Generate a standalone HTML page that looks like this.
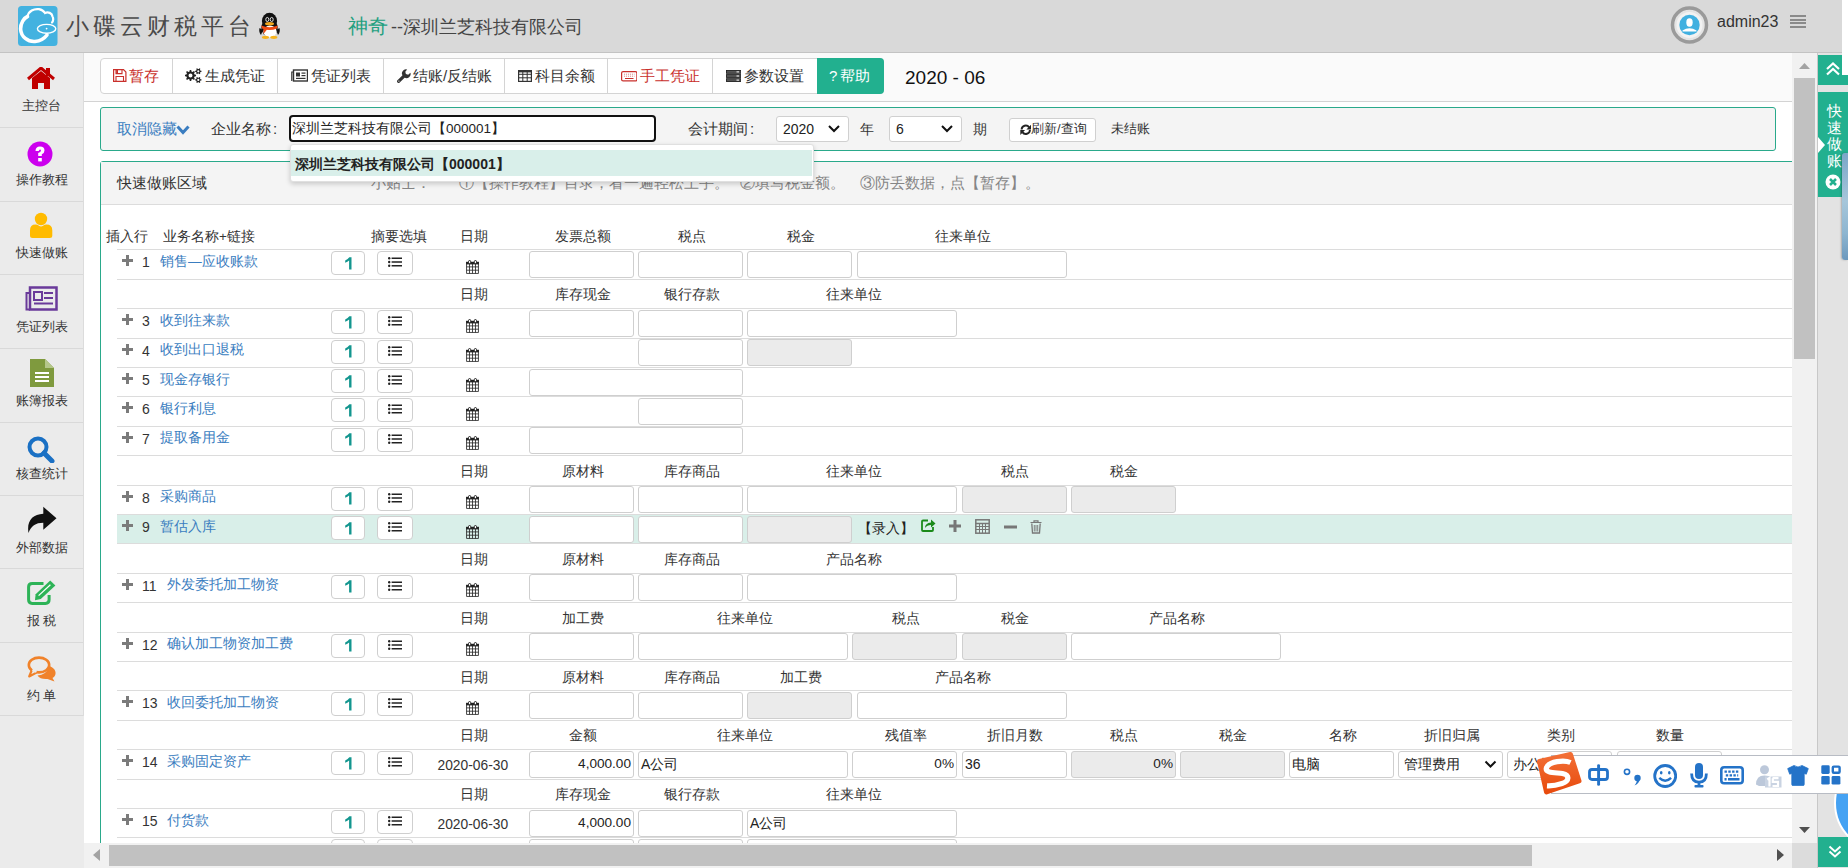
<!DOCTYPE html>
<html><head><meta charset="utf-8"><title>小碟云财税平台</title>
<style>
*{box-sizing:border-box;margin:0;padding:0}
html,body{width:1848px;height:868px;overflow:hidden;background:#fff;font-family:"Liberation Sans", sans-serif;color:#333;font-size:14px;text-spacing-trim:space-all}
.ab{position:absolute}
.t{position:absolute;white-space:nowrap;line-height:1}
.inp{position:absolute;border:1px solid #cfcfcf;border-radius:3px;background:#fff;height:27px}
.dis{background:#ebebeb}
.nb{position:absolute;width:34px;height:24px;border:1px solid #cfcfcf;border-radius:4px;background:#fff}
.lb{position:absolute;width:36px;height:24px;border:1px solid #cfcfcf;border-radius:4px;background:#fff}
.rl{position:absolute;left:117px;width:1675px;height:1px;background:#dcdcdc}
.link{color:#3a7dc0}
.hd{color:#333;font-size:13.5px}
.sbt{position:absolute;left:0;width:83px;text-align:center;font-size:13px;color:#333;line-height:1}
.sep{position:absolute;left:0;width:83px;height:1px;background:#d9d9d9}
</style></head><body>

<div class="ab" style="left:0;top:0;width:1842px;height:53px;background:#d9d9d9;border-bottom:1px solid #c3c3c3"></div>
<svg class="ab" style="left:18px;top:6px" width="40" height="40" viewBox="0 0 40 40">
<rect x="0" y="0" width="39.5" height="40" rx="3.5" fill="#43b2e0"/>
<path d="M9.5 10.5 C6 12, 2.5 17, 2.6 23 C3 31, 10 36, 17 35.5 C22 35, 26 33, 29 29" fill="none" stroke="#fff" stroke-width="3.6" stroke-linecap="round"/>
<path d="M9.5 10.5 C10.5 5, 16 2.5, 21 3.2 C24.5 3.8, 26 5.5, 27 7 C30 5.5, 34 7, 34.5 10.5 C35.5 12, 35.5 15, 34 16.5" fill="none" stroke="#fff" stroke-width="2.2" stroke-linecap="round"/>
<ellipse cx="28.6" cy="22.8" rx="9.2" ry="4.4" fill="none" stroke="#fff" stroke-width="1.4"/>
<circle cx="28.6" cy="22.6" r="0.9" fill="#fff"/>
</svg>
<div class="t" style="left:66px;top:15px;font-size:23px;color:#4a4a4a;font-weight:300;letter-spacing:4px">小碟云财税平台</div>
<svg class="ab" style="left:258px;top:12px" width="23" height="27" viewBox="0 0 23 27">
<ellipse cx="11.5" cy="9" rx="7.6" ry="8.2" fill="#111"/>
<ellipse cx="11.5" cy="16" rx="8.2" ry="9" fill="#111"/>
<path d="M1.5 16 Q0.5 20 3 23 L5 18Z M21.5 16 Q22.5 20 20 23 L18 18Z" fill="#111"/>
<ellipse cx="12" cy="19.5" rx="6.6" ry="6" fill="#fff"/>
<path d="M3.2 13.5 Q11.5 17 19.8 13.5 L19 16.5 Q11.5 19.5 4 16.5Z" fill="#f04a12"/>
<path d="M5.5 16 L5.5 22 L9 17.5Z" fill="#f04a12"/>
<ellipse cx="11.5" cy="11.8" rx="4.5" ry="1.7" fill="#f2a81e"/>
<ellipse cx="9.3" cy="7.5" rx="1.5" ry="2.1" fill="none" stroke="#eee" stroke-width="0.9"/><ellipse cx="13.7" cy="7.5" rx="1.5" ry="2.1" fill="none" stroke="#eee" stroke-width="0.9"/>
<ellipse cx="7.5" cy="25.3" rx="3.6" ry="1.6" fill="#f5b31e"/><ellipse cx="15.8" cy="25.3" rx="3.6" ry="1.6" fill="#f5b31e"/>
</svg>
<div class="t" style="left:348px;top:16px;font-size:20px;color:#24a07f">神奇</div>
<div class="t" style="left:391px;top:18px;font-size:18px;color:#444">--深圳兰芝科技有限公司</div>
<svg class="ab" style="left:1670px;top:5px" width="40" height="40" viewBox="0 0 40 40">
<circle cx="19.5" cy="20" r="17" fill="#e4e4e4" stroke="#9a9a9a" stroke-width="3.5"/>
<circle cx="19.5" cy="20" r="13" fill="#f2f2f2"/>
<circle cx="19.5" cy="20" r="10.2" fill="#41b0e0"/>
<ellipse cx="19.5" cy="17.5" rx="3.2" ry="4.2" fill="#fff"/>
<path d="M12.5 25.5 Q19.5 21 26.5 25.5 L26.5 26.5 L12.5 26.5Z" fill="#fff"/>
</svg>
<div class="t" style="left:1717px;top:14px;font-size:16px;color:#333">admin23</div>
<div class="ab" style="left:1790px;top:15px;width:16px;height:13px;background:repeating-linear-gradient(#8a8a8a 0 2px,transparent 2px 3.5px)"></div>
<div class="ab" style="left:0;top:53px;width:84px;height:815px;background:#ebebeb"></div>
<div class="ab" style="left:83px;top:53px;width:1px;height:663px;background:#dcdcdc"></div>
<div class="sep" style="top:127px"></div>
<div class="sep" style="top:201px"></div>
<div class="sep" style="top:274px"></div>
<div class="sep" style="top:348px"></div>
<div class="sep" style="top:422px"></div>
<div class="sep" style="top:495px"></div>
<div class="sep" style="top:568px"></div>
<div class="sep" style="top:642px"></div>
<div class="sep" style="top:715px"></div>
<div class="sbt" style="top:99px">主控台</div>
<div class="sbt" style="top:173px">操作教程</div>
<div class="sbt" style="top:246px">快速做账</div>
<div class="sbt" style="top:320px">凭证列表</div>
<div class="sbt" style="top:394px">账簿报表</div>
<div class="sbt" style="top:467px">核查统计</div>
<div class="sbt" style="top:541px">外部数据</div>
<div class="sbt" style="top:614px">报 税</div>
<div class="sbt" style="top:689px">约 单</div>
<svg class="ab" style="left:27px;top:67px" width="28" height="23" viewBox="0 0 28 23">
<path d="M1 12 L14 1 L27 12" fill="none" stroke="#c00000" stroke-width="3"/>
<rect x="19" y="1" width="4" height="8" fill="#c00000"/>
<path d="M5 11 L14 4 L23 11 L23 22 L17 22 L17 16 L11 16 L11 22 L5 22Z" fill="#c00000"/>
</svg>
<svg class="ab" style="left:27px;top:141px" width="26" height="26" viewBox="0 0 26 26">
<circle cx="13" cy="13" r="12.5" fill="#cc00ee"/>
<path d="M8.5 10 Q8.5 5.5 13 5.5 Q17.5 5.5 17.5 9.5 Q17.5 12 14.8 13.2 L14.8 15 L11.2 15 L11.2 12 Q14 11 14 9.5 Q14 8.5 13 8.5 Q12 8.5 11.8 10Z" fill="#fff"/>
<rect x="11.2" y="17" width="3.6" height="3.4" fill="#fff"/>
</svg>
<svg class="ab" style="left:29px;top:212px" width="24" height="27" viewBox="0 0 24 27">
<circle cx="12" cy="7" r="6.2" fill="#ffbb00"/>
<path d="M3.5 26 Q1 26 1 23.5 L1 18.5 Q1 12.6 6.5 12.6 Q8.5 12.6 10 13.8 Q12 15 14 13.8 Q15.5 12.6 17.5 12.6 Q23.3 12.6 23.3 18.5 L23.3 23.5 Q23.3 26 20.8 26Z" fill="#ffbb00"/>
</svg>
<svg class="ab" style="left:25px;top:286px" width="33" height="25" viewBox="0 0 33 25">
<rect x="5" y="1.5" width="26.5" height="22" fill="none" stroke="#6a3a9a" stroke-width="2.5"/>
<path d="M5 7 L1.5 7 L1.5 23.5 L5 23.5" fill="none" stroke="#6a3a9a" stroke-width="2"/>
<rect x="9" y="6" width="8" height="8" fill="none" stroke="#6a3a9a" stroke-width="2"/>
<rect x="19" y="6" width="9" height="2" fill="#6a3a9a"/><rect x="19" y="11" width="9" height="2" fill="#6a3a9a"/>
<rect x="9" y="16.5" width="19" height="2" fill="#6a3a9a"/>
</svg>
<svg class="ab" style="left:30px;top:359px" width="24" height="28" viewBox="0 0 24 28">
<path d="M0 0 L15 0 L24 9 L24 28 L0 28Z" fill="#7f9a3e"/>
<path d="M15 0 L15 9 L24 9Z" fill="#b5c78a"/>
<rect x="5" y="13" width="14" height="2" fill="#fff"/><rect x="5" y="17" width="14" height="2" fill="#fff"/><rect x="5" y="21" width="14" height="2" fill="#fff"/>
</svg>
<svg class="ab" style="left:27px;top:436px" width="28" height="27" viewBox="0 0 28 27">
<circle cx="11" cy="11" r="8.5" fill="none" stroke="#1a70c4" stroke-width="4"/>
<path d="M17 17 L25 25" stroke="#1a70c4" stroke-width="5" stroke-linecap="round"/>
</svg>
<svg class="ab" style="left:27px;top:506px" width="30" height="28" viewBox="0 0 30 28">
<path d="M1.5 27 C-0.5 15, 5.5 8.3, 16.3 7.8 L16.3 0.8 L29.5 12.3 L16.3 23.8 L16.3 16.8 C8.5 16.8, 4 20, 1.5 27Z" fill="#111"/>
</svg>
<svg class="ab" style="left:27px;top:580px" width="30" height="25" viewBox="0 0 30 25">
<path d="M16.5 3.5 L5.2 3.5 Q1.6 3.5 1.6 7.1 L1.6 19.8 Q1.6 23.4 5.2 23.4 L18.5 23.4 Q22.1 23.4 22.1 19.8 L22.1 15" fill="none" stroke="#2db357" stroke-width="3"/>
<path d="M8.6 14.2 L23.2 0.6 L28.4 5.4 L13.8 19 L8 20.2Z" fill="#2db357"/>
<path d="M11.6 15.6 L23.4 4.8" stroke="#fff" stroke-width="1.2"/>
</svg>
<svg class="ab" style="left:27px;top:656px" width="30" height="26" viewBox="0 0 30 26">
<path d="M20.5 9.5 Q27.5 11 28.5 16 Q29 20 25.5 22 L27.5 25.5 L20.5 23 Q13 23.5 10.5 19.5 Q19.5 18.5 21.2 12Z" fill="#f0822a"/>
<ellipse cx="12" cy="9" rx="10.2" ry="7.4" fill="#ebebeb" stroke="#f0822a" stroke-width="2.6"/>
<path d="M4.8 14.2 L2.2 20.5 L10 16.4" fill="#ebebeb" stroke="#f0822a" stroke-width="2.2" stroke-linejoin="round"/>
<path d="M5.6 13.6 L9.5 15.8" stroke="#ebebeb" stroke-width="2.4"/>
</svg>
<div class="ab" style="left:84px;top:53px;width:1708px;height:49px;background:#fafafa;border-bottom:1px solid #d3d3d3"></div>
<div class="ab" style="left:100px;top:58px;width:784px;height:36px;border:1px solid #d4d4d4;border-radius:4px;background:#fff"></div>
<div class="ab" style="left:172px;top:59px;width:1px;height:34px;background:#d4d4d4"></div>
<div class="ab" style="left:277px;top:59px;width:1px;height:34px;background:#d4d4d4"></div>
<div class="ab" style="left:383px;top:59px;width:1px;height:34px;background:#d4d4d4"></div>
<div class="ab" style="left:504px;top:59px;width:1px;height:34px;background:#d4d4d4"></div>
<div class="ab" style="left:607px;top:59px;width:1px;height:34px;background:#d4d4d4"></div>
<div class="ab" style="left:712px;top:59px;width:1px;height:34px;background:#d4d4d4"></div>
<div class="ab" style="left:817px;top:58px;width:67px;height:36px;background:#22b08f;border-radius:0 4px 4px 0"></div>
<div class="t" style="left:129px;top:68px;font-size:15px;color:#c9302c">暂存</div>
<div class="t" style="left:205px;top:68px;font-size:15px;color:#333">生成凭证</div>
<div class="t" style="left:311px;top:68px;font-size:15px;color:#333">凭证列表</div>
<div class="t" style="left:413px;top:68px;font-size:15px;color:#333">结账/反结账</div>
<div class="t" style="left:535px;top:68px;font-size:15px;color:#333">科目余额</div>
<div class="t" style="left:640px;top:68px;font-size:15px;color:#c9302c">手工凭证</div>
<div class="t" style="left:744px;top:68px;font-size:15px;color:#333">参数设置</div>
<div class="t" style="left:829px;top:68px;font-size:15px;color:#fff">?&thinsp;帮助</div>
<div class="t" style="left:905px;top:68px;font-size:19px;color:#111">2020 - 06</div>
<svg class="ab" style="left:113px;top:69px" width="14" height="13" viewBox="0 0 14 13"><path d="M0.6 0.6 L10.5 0.6 L12.9 3 L12.9 12.4 L0.6 12.4Z" fill="none" stroke="#c9302c" stroke-width="1.2"/><path d="M3 0.6 V4.6 H9 V0.6 M3 12.4 V7.5 H10.5 V12.4" fill="none" stroke="#c9302c" stroke-width="1.1"/><rect x="3.2" y="0.8" width="1.8" height="3.6" fill="#c9302c"/></svg>
<svg class="ab" style="left:185px;top:68px" width="17" height="15" viewBox="0 0 17 15"><path fill-rule="evenodd" d="M9.60 6.60 L11.05 6.73 L11.05 8.27 L9.60 8.40 L9.04 9.76 L9.96 10.88 L8.88 11.96 L7.76 11.04 L6.40 11.60 L6.27 13.05 L4.73 13.05 L4.60 11.60 L3.24 11.04 L2.12 11.96 L1.04 10.88 L1.96 9.76 L1.40 8.40 L-0.05 8.27 L-0.05 6.73 L1.40 6.60 L1.96 5.24 L1.04 4.12 L2.12 3.04 L3.24 3.96 L4.60 3.40 L4.73 1.95 L6.27 1.95 L6.40 3.40 L7.76 3.96 L8.88 3.04 L9.96 4.12 L9.04 5.24Z M7.50 7.50 A2.0 2.0 0 1 0 3.50 7.50 A2.0 2.0 0 1 0 7.50 7.50Z M15.51 2.65 L16.45 2.72 L16.45 3.88 L15.51 3.95 L14.97 4.88 L15.38 5.73 L14.37 6.32 L13.84 5.54 L12.76 5.54 L12.23 6.32 L11.22 5.73 L11.63 4.88 L11.09 3.95 L10.15 3.88 L10.15 2.72 L11.09 2.65 L11.63 1.72 L11.22 0.87 L12.23 0.28 L12.76 1.06 L13.84 1.06 L14.37 0.28 L15.38 0.87 L14.97 1.72Z M14.40 3.30 A1.1 1.1 0 1 0 12.20 3.30 A1.1 1.1 0 1 0 14.40 3.30Z M15.51 11.25 L16.45 11.32 L16.45 12.48 L15.51 12.55 L14.97 13.48 L15.38 14.33 L14.37 14.92 L13.84 14.14 L12.76 14.14 L12.23 14.92 L11.22 14.33 L11.63 13.48 L11.09 12.55 L10.15 12.48 L10.15 11.32 L11.09 11.25 L11.63 10.32 L11.22 9.47 L12.23 8.88 L12.76 9.66 L13.84 9.66 L14.37 8.88 L15.38 9.47 L14.97 10.32Z M14.40 11.90 A1.1 1.1 0 1 0 12.20 11.90 A1.1 1.1 0 1 0 14.40 11.90Z" fill="#222"/></svg>
<svg class="ab" style="left:291px;top:69px" width="17" height="13" viewBox="0 0 17 13">
<rect x="2.5" y="1" width="14" height="11" fill="none" stroke="#333" stroke-width="1.4"/>
<path d="M2.5 3 L0.8 3 L0.8 12" fill="none" stroke="#333" stroke-width="1.2"/>
<rect x="5" y="3.5" width="4" height="4" fill="#333"/>
<rect x="10.5" y="3.5" width="4" height="1.2" fill="#333"/><rect x="10.5" y="6" width="4" height="1.2" fill="#333"/><rect x="5" y="8.8" width="9.5" height="1.2" fill="#333"/>
</svg>
<svg class="ab" style="left:396.5px;top:69px" width="14" height="14" viewBox="0 0 14 14"><path d="M1.6 12.4 L7.2 6.8" stroke="#333" stroke-width="3.2" stroke-linecap="round"/><path d="M5.6 6.6 A4 4 0 0 1 10.2 0.6 L8.3 2.8 L8.9 5.1 L11.2 5.7 L13.4 3.8 A4 4 0 0 1 7.4 8.4Z" fill="#333"/><circle cx="1.9" cy="12.1" r="0.6" fill="#fff"/></svg>
<svg class="ab" style="left:517.5px;top:69.5px" width="14" height="12" viewBox="0 0 14 12"><rect x="0.6" y="0.6" width="12.8" height="10.8" fill="none" stroke="#333" stroke-width="1.2"/><path d="M0.6 1.6 H13.4" stroke="#333" stroke-width="1.6"/><path d="M0.6 4.3 H13.4 M0.6 7.8 H13.4 M4.8 0.6 V11.4 M9.2 0.6 V11.4" stroke="#333" stroke-width="1"/></svg>
<svg class="ab" style="left:620.5px;top:71px" width="16.5" height="10.5" viewBox="0 0 16.5 10.5"><rect x="0.6" y="0.6" width="15.3" height="9.3" rx="1.5" fill="none" stroke="#c9302c" stroke-width="1.2"/><path d="M3 3.2 H13.5 M3 5.2 H13.5" stroke="#d98a88" stroke-width="1" stroke-dasharray="1.1 0.9"/><path d="M4 7.5 H12.5" stroke="#c9302c" stroke-width="1"/></svg>
<svg class="ab" style="left:725.5px;top:69.5px" width="15.5" height="12" viewBox="0 0 15.5 12"><rect x="0.5" y="0.5" width="14.5" height="2.8" fill="#555" stroke="#222" stroke-width="0.9"/><rect x="0.5" y="4.6" width="14.5" height="2.8" fill="#555" stroke="#222" stroke-width="0.9"/><rect x="0.5" y="8.7" width="14.5" height="2.8" fill="#555" stroke="#222" stroke-width="0.9"/><rect x="10.5" y="1.4" width="2.5" height="1" fill="#fff"/><rect x="10.5" y="5.5" width="2.5" height="1" fill="#fff"/><rect x="10.5" y="9.6" width="2.5" height="1" fill="#fff"/></svg>
<div class="ab" style="left:100px;top:107px;width:1676px;height:44px;background:#f4f4f4;border:1px solid #2aa98b;border-radius:3px"></div>
<div class="t link" style="left:117px;top:121px;font-size:15px">取消隐藏</div>
<svg class="ab" style="left:176px;top:125px" width="14" height="10" viewBox="0 0 14 10"><path d="M1.5 1.5 L7 7.5 L12.5 1.5" fill="none" stroke="#3a7dc0" stroke-width="3"/></svg>
<div class="t" style="left:211px;top:121px;font-size:15px;color:#333">企业名称<span style="margin-left:2px">:</span></div>
<div class="ab" style="left:289px;top:115px;width:367px;height:27px;border:2px solid #111;border-radius:4px;background:#fff"></div>
<div class="t" style="left:292px;top:122px;font-size:13.5px;color:#222">深圳兰芝科技有限公司【000001】</div>
<div class="t" style="left:688px;top:121px;font-size:15px;color:#333">会计期间<span style="margin-left:2px">:</span></div>
<div class="ab" style="left:776px;top:116px;width:73px;height:26px;border:1px solid #d0d0d0;border-radius:3px;background:#fff"></div>
<div class="t" style="left:783px;top:122px;font-size:14px;color:#222">2020</div>
<svg class="ab" style="left:827px;top:124px" width="14" height="10" viewBox="0 0 14 10"><path d="M2 2 L7 7 L12 2" fill="none" stroke="#111" stroke-width="2"/></svg>
<div class="ab" style="left:889px;top:116px;width:73px;height:26px;border:1px solid #d0d0d0;border-radius:3px;background:#fff"></div>
<div class="t" style="left:896px;top:122px;font-size:14px;color:#222">6</div>
<svg class="ab" style="left:940px;top:124px" width="14" height="10" viewBox="0 0 14 10"><path d="M2 2 L7 7 L12 2" fill="none" stroke="#111" stroke-width="2"/></svg>
<div class="t" style="left:860px;top:122px;font-size:14px;color:#333">年</div>
<div class="t" style="left:973px;top:122px;font-size:14px;color:#333">期</div>
<div class="ab" style="left:1009px;top:118px;width:87px;height:24px;border:1px solid #d0d0d0;border-radius:3px;background:#fff"></div>
<svg class="ab" style="left:1019.5px;top:123.5px" width="11.5" height="11.5" viewBox="0 0 11.5 11.5"><path d="M1.6 5.6 A4.1 4.1 0 0 1 9.1 3.4" fill="none" stroke="#222" stroke-width="1.9"/><path d="M11.2 0.6 L11.2 5.4 L6.4 5.4Z" fill="#222"/><path d="M9.9 5.9 A4.1 4.1 0 0 1 2.4 8.1" fill="none" stroke="#222" stroke-width="1.9"/><path d="M0.3 10.9 L0.3 6.1 L5.1 6.1Z" fill="#222"/></svg>
<div class="t" style="left:1031px;top:122px;font-size:13px;color:#333">刷新/查询</div>
<div class="t" style="left:1111px;top:122px;font-size:13px;color:#333">未结账</div>
<div class="ab" style="left:100px;top:161px;width:1720px;height:720px;border:1px solid #2aa98b;border-radius:3px;background:#fff"></div>
<div class="ab" style="left:101px;top:162px;width:1691px;height:43px;background:#f4f4f4;border-bottom:1px solid #dcdcdc"></div>
<div class="t" style="left:117px;top:176px;font-size:14.6px;color:#333">快速做账区域</div>
<div class="t" style="left:371px;top:176px;font-size:14.7px;color:#858585">小贴士：</div>
<div class="t" style="left:459px;top:176px;font-size:14.7px;color:#858585">①【操作教程】目录，看一遍轻松上手。</div>
<div class="t" style="left:740px;top:176px;font-size:14.7px;color:#858585">②填写税金额。</div>
<div class="t" style="left:860px;top:176px;font-size:14.7px;color:#858585">③防丢数据，点【暂存】。</div>
<div class="t hd" style="left:106px;top:230px">插入行</div>
<div class="t hd" style="left:163px;top:230px">业务名称+链接</div>
<div class="t hd" style="left:371px;top:230px">摘要选填</div>
<div class="ab" style="left:117px;top:514.0px;width:1675px;height:29.4px;background:#d9efe9"></div>
<div class="rl" style="top:249.4px"></div>
<div class="rl" style="top:278.8px"></div>
<div class="rl" style="top:308.2px"></div>
<div class="rl" style="top:337.6px"></div>
<div class="rl" style="top:367.0px"></div>
<div class="rl" style="top:396.4px"></div>
<div class="rl" style="top:425.8px"></div>
<div class="rl" style="top:455.2px"></div>
<div class="rl" style="top:484.6px"></div>
<div class="rl" style="top:514.0px"></div>
<div class="rl" style="top:543.4px"></div>
<div class="rl" style="top:572.8px"></div>
<div class="rl" style="top:602.2px"></div>
<div class="rl" style="top:631.6px"></div>
<div class="rl" style="top:661.0px"></div>
<div class="rl" style="top:690.4px"></div>
<div class="rl" style="top:719.8px"></div>
<div class="rl" style="top:749.2px"></div>
<div class="rl" style="top:778.6px"></div>
<div class="rl" style="top:808.0px"></div>
<div class="rl" style="top:837.4px"></div>
<div class="t hd" style="left:274px;width:400px;text-align:center;top:230.0px">日期</div>
<div class="t hd" style="left:383px;width:400px;text-align:center;top:230.0px">发票总额</div>
<div class="t hd" style="left:492px;width:400px;text-align:center;top:230.0px">税点</div>
<div class="t hd" style="left:601px;width:400px;text-align:center;top:230.0px">税金</div>
<div class="t hd" style="left:763px;width:400px;text-align:center;top:230.0px">往来单位</div>
<div class="t hd" style="left:274px;width:400px;text-align:center;top:288.3px">日期</div>
<div class="t hd" style="left:383px;width:400px;text-align:center;top:288.3px">库存现金</div>
<div class="t hd" style="left:492px;width:400px;text-align:center;top:288.3px">银行存款</div>
<div class="t hd" style="left:654px;width:400px;text-align:center;top:288.3px">往来单位</div>
<div class="t hd" style="left:274px;width:400px;text-align:center;top:464.7px">日期</div>
<div class="t hd" style="left:383px;width:400px;text-align:center;top:464.7px">原材料</div>
<div class="t hd" style="left:492px;width:400px;text-align:center;top:464.7px">库存商品</div>
<div class="t hd" style="left:654px;width:400px;text-align:center;top:464.7px">往来单位</div>
<div class="t hd" style="left:815px;width:400px;text-align:center;top:464.7px">税点</div>
<div class="t hd" style="left:924px;width:400px;text-align:center;top:464.7px">税金</div>
<div class="t hd" style="left:274px;width:400px;text-align:center;top:552.9px">日期</div>
<div class="t hd" style="left:383px;width:400px;text-align:center;top:552.9px">原材料</div>
<div class="t hd" style="left:492px;width:400px;text-align:center;top:552.9px">库存商品</div>
<div class="t hd" style="left:654px;width:400px;text-align:center;top:552.9px">产品名称</div>
<div class="t hd" style="left:274px;width:400px;text-align:center;top:611.7px">日期</div>
<div class="t hd" style="left:383px;width:400px;text-align:center;top:611.7px">加工费</div>
<div class="t hd" style="left:545px;width:400px;text-align:center;top:611.7px">往来单位</div>
<div class="t hd" style="left:706px;width:400px;text-align:center;top:611.7px">税点</div>
<div class="t hd" style="left:815px;width:400px;text-align:center;top:611.7px">税金</div>
<div class="t hd" style="left:977px;width:400px;text-align:center;top:611.7px">产品名称</div>
<div class="t hd" style="left:274px;width:400px;text-align:center;top:670.5px">日期</div>
<div class="t hd" style="left:383px;width:400px;text-align:center;top:670.5px">原材料</div>
<div class="t hd" style="left:492px;width:400px;text-align:center;top:670.5px">库存商品</div>
<div class="t hd" style="left:601px;width:400px;text-align:center;top:670.5px">加工费</div>
<div class="t hd" style="left:763px;width:400px;text-align:center;top:670.5px">产品名称</div>
<div class="t hd" style="left:274px;width:400px;text-align:center;top:729.3px">日期</div>
<div class="t hd" style="left:383px;width:400px;text-align:center;top:729.3px">金额</div>
<div class="t hd" style="left:545px;width:400px;text-align:center;top:729.3px">往来单位</div>
<div class="t hd" style="left:706px;width:400px;text-align:center;top:729.3px">残值率</div>
<div class="t hd" style="left:815px;width:400px;text-align:center;top:729.3px">折旧月数</div>
<div class="t hd" style="left:924px;width:400px;text-align:center;top:729.3px">税点</div>
<div class="t hd" style="left:1033px;width:400px;text-align:center;top:729.3px">税金</div>
<div class="t hd" style="left:1143px;width:400px;text-align:center;top:729.3px">名称</div>
<div class="t hd" style="left:1252px;width:400px;text-align:center;top:729.3px">折旧归属</div>
<div class="t hd" style="left:1361px;width:400px;text-align:center;top:729.3px">类别</div>
<div class="t hd" style="left:1470px;width:400px;text-align:center;top:729.3px">数量</div>
<div class="t hd" style="left:274px;width:400px;text-align:center;top:788.1px">日期</div>
<div class="t hd" style="left:383px;width:400px;text-align:center;top:788.1px">库存现金</div>
<div class="t hd" style="left:492px;width:400px;text-align:center;top:788.1px">银行存款</div>
<div class="t hd" style="left:654px;width:400px;text-align:center;top:788.1px">往来单位</div>
<div class="inp" style="left:529px;top:251.0px;width:105px"></div>
<div class="inp" style="left:638px;top:251.0px;width:105px"></div>
<div class="inp" style="left:747px;top:251.0px;width:105px"></div>
<div class="inp" style="left:857px;top:251.0px;width:210px"></div>
<div class="inp" style="left:529px;top:309.8px;width:105px"></div>
<div class="inp" style="left:638px;top:309.8px;width:105px"></div>
<div class="inp" style="left:747px;top:309.8px;width:210px"></div>
<div class="inp" style="left:638px;top:339.2px;width:105px"></div>
<div class="inp dis" style="left:747px;top:339.2px;width:105px"></div>
<div class="inp" style="left:529px;top:368.6px;width:214px"></div>
<div class="inp" style="left:638px;top:398.0px;width:105px"></div>
<div class="inp" style="left:529px;top:427.4px;width:214px"></div>
<div class="inp" style="left:529px;top:486.2px;width:105px"></div>
<div class="inp" style="left:638px;top:486.2px;width:105px"></div>
<div class="inp" style="left:747px;top:486.2px;width:210px"></div>
<div class="inp dis" style="left:962px;top:486.2px;width:105px"></div>
<div class="inp dis" style="left:1071px;top:486.2px;width:105px"></div>
<div class="inp" style="left:529px;top:515.6px;width:105px"></div>
<div class="inp" style="left:638px;top:515.6px;width:105px"></div>
<div class="inp dis" style="left:747px;top:515.6px;width:105px"></div>
<div class="inp" style="left:529px;top:574.4px;width:105px"></div>
<div class="inp" style="left:638px;top:574.4px;width:105px"></div>
<div class="inp" style="left:747px;top:574.4px;width:210px"></div>
<div class="inp" style="left:529px;top:633.2px;width:105px"></div>
<div class="inp" style="left:638px;top:633.2px;width:210px"></div>
<div class="inp dis" style="left:852px;top:633.2px;width:105px"></div>
<div class="inp dis" style="left:962px;top:633.2px;width:105px"></div>
<div class="inp" style="left:1071px;top:633.2px;width:210px"></div>
<div class="inp" style="left:529px;top:692.0px;width:105px"></div>
<div class="inp" style="left:638px;top:692.0px;width:105px"></div>
<div class="inp dis" style="left:747px;top:692.0px;width:105px"></div>
<div class="inp" style="left:857px;top:692.0px;width:210px"></div>
<div class="inp" style="left:529px;top:750.8px;width:105px"></div>
<div class="t" style="left:529px;width:102px;text-align:right;top:757.3px;font-size:13.6px;color:#222">4,000.00</div>
<div class="inp" style="left:638px;top:750.8px;width:210px"></div>
<div class="t" style="left:641px;top:757.3px;font-size:14px;color:#222">A公司</div>
<div class="inp" style="left:852px;top:750.8px;width:105px"></div>
<div class="t" style="left:852px;width:102px;text-align:right;top:757.3px;font-size:13.6px;color:#222">0%</div>
<div class="inp" style="left:962px;top:750.8px;width:105px"></div>
<div class="t" style="left:965px;top:757.3px;font-size:14px;color:#222">36</div>
<div class="inp dis" style="left:1071px;top:750.8px;width:105px"></div>
<div class="t" style="left:1071px;width:102px;text-align:right;top:757.3px;font-size:13.6px;color:#222">0%</div>
<div class="inp dis" style="left:1180px;top:750.8px;width:105px"></div>
<div class="inp" style="left:1289px;top:750.8px;width:105px"></div>
<div class="t" style="left:1292px;top:757.3px;font-size:14px;color:#222">电脑</div>
<div class="inp" style="left:1398px;top:750.8px;width:105px"></div>
<div class="t" style="left:1404px;top:757.3px;font-size:14px;color:#222">管理费用</div>
<svg class="ab" style="left:1484px;top:759.8px" width="13" height="9" viewBox="0 0 13 9"><path d="M1.5 1.5 L6.5 6.5 L11.5 1.5" fill="none" stroke="#111" stroke-width="2"/></svg>
<div class="inp" style="left:1507px;top:750.8px;width:105px"></div>
<div class="t" style="left:1513px;top:757.3px;font-size:14px;color:#222">办公设备</div>
<svg class="ab" style="left:1593px;top:759.8px" width="13" height="9" viewBox="0 0 13 9"><path d="M1.5 1.5 L6.5 6.5 L11.5 1.5" fill="none" stroke="#111" stroke-width="2"/></svg>
<div class="inp" style="left:1617px;top:750.8px;width:105px"></div>
<div class="inp" style="left:529px;top:809.6px;width:105px"></div>
<div class="t" style="left:529px;width:102px;text-align:right;top:816.1px;font-size:13.6px;color:#222">4,000.00</div>
<div class="inp" style="left:638px;top:809.6px;width:105px"></div>
<div class="inp" style="left:747px;top:809.6px;width:210px"></div>
<div class="t" style="left:750px;top:816.1px;font-size:14px;color:#222">A公司</div>
<div class="inp" style="left:529px;top:839.0px;width:105px"></div>
<div class="inp" style="left:638px;top:839.0px;width:105px"></div>
<div class="inp" style="left:747px;top:839.0px;width:210px"></div>
<svg class="ab" style="left:122px;top:255.4px" width="11" height="11" viewBox="0 0 11 11"><path d="M5.5 0 V11 M0 5.5 H11" stroke="#7b7b7b" stroke-width="3"/></svg>
<div class="t" style="left:142px;top:255.4px;font-size:14px;color:#333">1</div>
<div class="t link" style="left:160px;top:255.0px;font-size:13.7px">销售—应收账款</div>
<div class="nb" style="left:331px;top:251.4px"><svg style="position:absolute;left:12px;top:4.5px" width="9" height="13" viewBox="0 0 9 13"><path d="M5.3 0.3 L7.5 0.3 L7.5 12.6 L5.1 12.6 L5.1 3.6 Q3.6 5 1.2 5.8 L1.2 3.5 Q4 2.4 5.3 0.3Z" fill="#13968f"/></svg></div>
<div class="lb" style="left:377px;top:251.4px"></div>
<svg class="ab" style="left:388px;top:257.4px" width="14" height="10" viewBox="0 0 14 10"><circle cx="1.2" cy="1.2" r="1.2" fill="#222"/><circle cx="1.2" cy="5" r="1.2" fill="#222"/><circle cx="1.2" cy="8.8" r="1.2" fill="#222"/><path d="M3.6 1.2 H14 M3.6 5 H14 M3.6 8.8 H14" stroke="#222" stroke-width="1.45"/></svg>
<svg class="ab" style="left:466px;top:260.0px" width="13" height="14" viewBox="0 0 13 14"><rect x="0" y="1.8" width="13" height="2.6" fill="#222"/><path d="M0.55 2 V13.45 H12.45 V2 M0.5 6.9 H12.5 M0.5 10.2 H12.5 M3.5 4 V13.5 M6.5 4 V13.5 M9.5 4 V13.5" fill="none" stroke="#2a2a2a" stroke-width="0.85"/><rect x="2.5" y="0.5" width="2.2" height="3.2" rx="1.1" fill="#fff" stroke="#222" stroke-width="1"/><rect x="8.3" y="0.5" width="2.2" height="3.2" rx="1.1" fill="#fff" stroke="#222" stroke-width="1"/></svg>
<svg class="ab" style="left:122px;top:314.2px" width="11" height="11" viewBox="0 0 11 11"><path d="M5.5 0 V11 M0 5.5 H11" stroke="#7b7b7b" stroke-width="3"/></svg>
<div class="t" style="left:142px;top:314.2px;font-size:14px;color:#333">3</div>
<div class="t link" style="left:160px;top:313.8px;font-size:13.7px">收到往来款</div>
<div class="nb" style="left:331px;top:310.2px"><svg style="position:absolute;left:12px;top:4.5px" width="9" height="13" viewBox="0 0 9 13"><path d="M5.3 0.3 L7.5 0.3 L7.5 12.6 L5.1 12.6 L5.1 3.6 Q3.6 5 1.2 5.8 L1.2 3.5 Q4 2.4 5.3 0.3Z" fill="#13968f"/></svg></div>
<div class="lb" style="left:377px;top:310.2px"></div>
<svg class="ab" style="left:388px;top:316.2px" width="14" height="10" viewBox="0 0 14 10"><circle cx="1.2" cy="1.2" r="1.2" fill="#222"/><circle cx="1.2" cy="5" r="1.2" fill="#222"/><circle cx="1.2" cy="8.8" r="1.2" fill="#222"/><path d="M3.6 1.2 H14 M3.6 5 H14 M3.6 8.8 H14" stroke="#222" stroke-width="1.45"/></svg>
<svg class="ab" style="left:466px;top:318.8px" width="13" height="14" viewBox="0 0 13 14"><rect x="0" y="1.8" width="13" height="2.6" fill="#222"/><path d="M0.55 2 V13.45 H12.45 V2 M0.5 6.9 H12.5 M0.5 10.2 H12.5 M3.5 4 V13.5 M6.5 4 V13.5 M9.5 4 V13.5" fill="none" stroke="#2a2a2a" stroke-width="0.85"/><rect x="2.5" y="0.5" width="2.2" height="3.2" rx="1.1" fill="#fff" stroke="#222" stroke-width="1"/><rect x="8.3" y="0.5" width="2.2" height="3.2" rx="1.1" fill="#fff" stroke="#222" stroke-width="1"/></svg>
<svg class="ab" style="left:122px;top:343.6px" width="11" height="11" viewBox="0 0 11 11"><path d="M5.5 0 V11 M0 5.5 H11" stroke="#7b7b7b" stroke-width="3"/></svg>
<div class="t" style="left:142px;top:343.6px;font-size:14px;color:#333">4</div>
<div class="t link" style="left:160px;top:343.2px;font-size:13.7px">收到出口退税</div>
<div class="nb" style="left:331px;top:339.6px"><svg style="position:absolute;left:12px;top:4.5px" width="9" height="13" viewBox="0 0 9 13"><path d="M5.3 0.3 L7.5 0.3 L7.5 12.6 L5.1 12.6 L5.1 3.6 Q3.6 5 1.2 5.8 L1.2 3.5 Q4 2.4 5.3 0.3Z" fill="#13968f"/></svg></div>
<div class="lb" style="left:377px;top:339.6px"></div>
<svg class="ab" style="left:388px;top:345.6px" width="14" height="10" viewBox="0 0 14 10"><circle cx="1.2" cy="1.2" r="1.2" fill="#222"/><circle cx="1.2" cy="5" r="1.2" fill="#222"/><circle cx="1.2" cy="8.8" r="1.2" fill="#222"/><path d="M3.6 1.2 H14 M3.6 5 H14 M3.6 8.8 H14" stroke="#222" stroke-width="1.45"/></svg>
<svg class="ab" style="left:466px;top:348.2px" width="13" height="14" viewBox="0 0 13 14"><rect x="0" y="1.8" width="13" height="2.6" fill="#222"/><path d="M0.55 2 V13.45 H12.45 V2 M0.5 6.9 H12.5 M0.5 10.2 H12.5 M3.5 4 V13.5 M6.5 4 V13.5 M9.5 4 V13.5" fill="none" stroke="#2a2a2a" stroke-width="0.85"/><rect x="2.5" y="0.5" width="2.2" height="3.2" rx="1.1" fill="#fff" stroke="#222" stroke-width="1"/><rect x="8.3" y="0.5" width="2.2" height="3.2" rx="1.1" fill="#fff" stroke="#222" stroke-width="1"/></svg>
<svg class="ab" style="left:122px;top:373.0px" width="11" height="11" viewBox="0 0 11 11"><path d="M5.5 0 V11 M0 5.5 H11" stroke="#7b7b7b" stroke-width="3"/></svg>
<div class="t" style="left:142px;top:373.0px;font-size:14px;color:#333">5</div>
<div class="t link" style="left:160px;top:372.6px;font-size:13.7px">现金存银行</div>
<div class="nb" style="left:331px;top:369.0px"><svg style="position:absolute;left:12px;top:4.5px" width="9" height="13" viewBox="0 0 9 13"><path d="M5.3 0.3 L7.5 0.3 L7.5 12.6 L5.1 12.6 L5.1 3.6 Q3.6 5 1.2 5.8 L1.2 3.5 Q4 2.4 5.3 0.3Z" fill="#13968f"/></svg></div>
<div class="lb" style="left:377px;top:369.0px"></div>
<svg class="ab" style="left:388px;top:375.0px" width="14" height="10" viewBox="0 0 14 10"><circle cx="1.2" cy="1.2" r="1.2" fill="#222"/><circle cx="1.2" cy="5" r="1.2" fill="#222"/><circle cx="1.2" cy="8.8" r="1.2" fill="#222"/><path d="M3.6 1.2 H14 M3.6 5 H14 M3.6 8.8 H14" stroke="#222" stroke-width="1.45"/></svg>
<svg class="ab" style="left:466px;top:377.6px" width="13" height="14" viewBox="0 0 13 14"><rect x="0" y="1.8" width="13" height="2.6" fill="#222"/><path d="M0.55 2 V13.45 H12.45 V2 M0.5 6.9 H12.5 M0.5 10.2 H12.5 M3.5 4 V13.5 M6.5 4 V13.5 M9.5 4 V13.5" fill="none" stroke="#2a2a2a" stroke-width="0.85"/><rect x="2.5" y="0.5" width="2.2" height="3.2" rx="1.1" fill="#fff" stroke="#222" stroke-width="1"/><rect x="8.3" y="0.5" width="2.2" height="3.2" rx="1.1" fill="#fff" stroke="#222" stroke-width="1"/></svg>
<svg class="ab" style="left:122px;top:402.4px" width="11" height="11" viewBox="0 0 11 11"><path d="M5.5 0 V11 M0 5.5 H11" stroke="#7b7b7b" stroke-width="3"/></svg>
<div class="t" style="left:142px;top:402.4px;font-size:14px;color:#333">6</div>
<div class="t link" style="left:160px;top:402.0px;font-size:13.7px">银行利息</div>
<div class="nb" style="left:331px;top:398.4px"><svg style="position:absolute;left:12px;top:4.5px" width="9" height="13" viewBox="0 0 9 13"><path d="M5.3 0.3 L7.5 0.3 L7.5 12.6 L5.1 12.6 L5.1 3.6 Q3.6 5 1.2 5.8 L1.2 3.5 Q4 2.4 5.3 0.3Z" fill="#13968f"/></svg></div>
<div class="lb" style="left:377px;top:398.4px"></div>
<svg class="ab" style="left:388px;top:404.4px" width="14" height="10" viewBox="0 0 14 10"><circle cx="1.2" cy="1.2" r="1.2" fill="#222"/><circle cx="1.2" cy="5" r="1.2" fill="#222"/><circle cx="1.2" cy="8.8" r="1.2" fill="#222"/><path d="M3.6 1.2 H14 M3.6 5 H14 M3.6 8.8 H14" stroke="#222" stroke-width="1.45"/></svg>
<svg class="ab" style="left:466px;top:407.0px" width="13" height="14" viewBox="0 0 13 14"><rect x="0" y="1.8" width="13" height="2.6" fill="#222"/><path d="M0.55 2 V13.45 H12.45 V2 M0.5 6.9 H12.5 M0.5 10.2 H12.5 M3.5 4 V13.5 M6.5 4 V13.5 M9.5 4 V13.5" fill="none" stroke="#2a2a2a" stroke-width="0.85"/><rect x="2.5" y="0.5" width="2.2" height="3.2" rx="1.1" fill="#fff" stroke="#222" stroke-width="1"/><rect x="8.3" y="0.5" width="2.2" height="3.2" rx="1.1" fill="#fff" stroke="#222" stroke-width="1"/></svg>
<svg class="ab" style="left:122px;top:431.8px" width="11" height="11" viewBox="0 0 11 11"><path d="M5.5 0 V11 M0 5.5 H11" stroke="#7b7b7b" stroke-width="3"/></svg>
<div class="t" style="left:142px;top:431.8px;font-size:14px;color:#333">7</div>
<div class="t link" style="left:160px;top:431.4px;font-size:13.7px">提取备用金</div>
<div class="nb" style="left:331px;top:427.8px"><svg style="position:absolute;left:12px;top:4.5px" width="9" height="13" viewBox="0 0 9 13"><path d="M5.3 0.3 L7.5 0.3 L7.5 12.6 L5.1 12.6 L5.1 3.6 Q3.6 5 1.2 5.8 L1.2 3.5 Q4 2.4 5.3 0.3Z" fill="#13968f"/></svg></div>
<div class="lb" style="left:377px;top:427.8px"></div>
<svg class="ab" style="left:388px;top:433.8px" width="14" height="10" viewBox="0 0 14 10"><circle cx="1.2" cy="1.2" r="1.2" fill="#222"/><circle cx="1.2" cy="5" r="1.2" fill="#222"/><circle cx="1.2" cy="8.8" r="1.2" fill="#222"/><path d="M3.6 1.2 H14 M3.6 5 H14 M3.6 8.8 H14" stroke="#222" stroke-width="1.45"/></svg>
<svg class="ab" style="left:466px;top:436.4px" width="13" height="14" viewBox="0 0 13 14"><rect x="0" y="1.8" width="13" height="2.6" fill="#222"/><path d="M0.55 2 V13.45 H12.45 V2 M0.5 6.9 H12.5 M0.5 10.2 H12.5 M3.5 4 V13.5 M6.5 4 V13.5 M9.5 4 V13.5" fill="none" stroke="#2a2a2a" stroke-width="0.85"/><rect x="2.5" y="0.5" width="2.2" height="3.2" rx="1.1" fill="#fff" stroke="#222" stroke-width="1"/><rect x="8.3" y="0.5" width="2.2" height="3.2" rx="1.1" fill="#fff" stroke="#222" stroke-width="1"/></svg>
<svg class="ab" style="left:122px;top:490.6px" width="11" height="11" viewBox="0 0 11 11"><path d="M5.5 0 V11 M0 5.5 H11" stroke="#7b7b7b" stroke-width="3"/></svg>
<div class="t" style="left:142px;top:490.6px;font-size:14px;color:#333">8</div>
<div class="t link" style="left:160px;top:490.2px;font-size:13.7px">采购商品</div>
<div class="nb" style="left:331px;top:486.6px"><svg style="position:absolute;left:12px;top:4.5px" width="9" height="13" viewBox="0 0 9 13"><path d="M5.3 0.3 L7.5 0.3 L7.5 12.6 L5.1 12.6 L5.1 3.6 Q3.6 5 1.2 5.8 L1.2 3.5 Q4 2.4 5.3 0.3Z" fill="#13968f"/></svg></div>
<div class="lb" style="left:377px;top:486.6px"></div>
<svg class="ab" style="left:388px;top:492.6px" width="14" height="10" viewBox="0 0 14 10"><circle cx="1.2" cy="1.2" r="1.2" fill="#222"/><circle cx="1.2" cy="5" r="1.2" fill="#222"/><circle cx="1.2" cy="8.8" r="1.2" fill="#222"/><path d="M3.6 1.2 H14 M3.6 5 H14 M3.6 8.8 H14" stroke="#222" stroke-width="1.45"/></svg>
<svg class="ab" style="left:466px;top:495.2px" width="13" height="14" viewBox="0 0 13 14"><rect x="0" y="1.8" width="13" height="2.6" fill="#222"/><path d="M0.55 2 V13.45 H12.45 V2 M0.5 6.9 H12.5 M0.5 10.2 H12.5 M3.5 4 V13.5 M6.5 4 V13.5 M9.5 4 V13.5" fill="none" stroke="#2a2a2a" stroke-width="0.85"/><rect x="2.5" y="0.5" width="2.2" height="3.2" rx="1.1" fill="#fff" stroke="#222" stroke-width="1"/><rect x="8.3" y="0.5" width="2.2" height="3.2" rx="1.1" fill="#fff" stroke="#222" stroke-width="1"/></svg>
<svg class="ab" style="left:122px;top:520.0px" width="11" height="11" viewBox="0 0 11 11"><path d="M5.5 0 V11 M0 5.5 H11" stroke="#7b7b7b" stroke-width="3"/></svg>
<div class="t" style="left:142px;top:520.0px;font-size:14px;color:#333">9</div>
<div class="t link" style="left:160px;top:519.6px;font-size:13.7px">暂估入库</div>
<div class="nb" style="left:331px;top:516.0px"><svg style="position:absolute;left:12px;top:4.5px" width="9" height="13" viewBox="0 0 9 13"><path d="M5.3 0.3 L7.5 0.3 L7.5 12.6 L5.1 12.6 L5.1 3.6 Q3.6 5 1.2 5.8 L1.2 3.5 Q4 2.4 5.3 0.3Z" fill="#13968f"/></svg></div>
<div class="lb" style="left:377px;top:516.0px"></div>
<svg class="ab" style="left:388px;top:522.0px" width="14" height="10" viewBox="0 0 14 10"><circle cx="1.2" cy="1.2" r="1.2" fill="#222"/><circle cx="1.2" cy="5" r="1.2" fill="#222"/><circle cx="1.2" cy="8.8" r="1.2" fill="#222"/><path d="M3.6 1.2 H14 M3.6 5 H14 M3.6 8.8 H14" stroke="#222" stroke-width="1.45"/></svg>
<svg class="ab" style="left:466px;top:524.6px" width="13" height="14" viewBox="0 0 13 14"><rect x="0" y="1.8" width="13" height="2.6" fill="#222"/><path d="M0.55 2 V13.45 H12.45 V2 M0.5 6.9 H12.5 M0.5 10.2 H12.5 M3.5 4 V13.5 M6.5 4 V13.5 M9.5 4 V13.5" fill="none" stroke="#2a2a2a" stroke-width="0.85"/><rect x="2.5" y="0.5" width="2.2" height="3.2" rx="1.1" fill="#fff" stroke="#222" stroke-width="1"/><rect x="8.3" y="0.5" width="2.2" height="3.2" rx="1.1" fill="#fff" stroke="#222" stroke-width="1"/></svg>
<svg class="ab" style="left:122px;top:578.8px" width="11" height="11" viewBox="0 0 11 11"><path d="M5.5 0 V11 M0 5.5 H11" stroke="#7b7b7b" stroke-width="3"/></svg>
<div class="t" style="left:142px;top:578.8px;font-size:14px;color:#333">11</div>
<div class="t link" style="left:167px;top:578.4px;font-size:13.7px">外发委托加工物资</div>
<div class="nb" style="left:331px;top:574.8px"><svg style="position:absolute;left:12px;top:4.5px" width="9" height="13" viewBox="0 0 9 13"><path d="M5.3 0.3 L7.5 0.3 L7.5 12.6 L5.1 12.6 L5.1 3.6 Q3.6 5 1.2 5.8 L1.2 3.5 Q4 2.4 5.3 0.3Z" fill="#13968f"/></svg></div>
<div class="lb" style="left:377px;top:574.8px"></div>
<svg class="ab" style="left:388px;top:580.8px" width="14" height="10" viewBox="0 0 14 10"><circle cx="1.2" cy="1.2" r="1.2" fill="#222"/><circle cx="1.2" cy="5" r="1.2" fill="#222"/><circle cx="1.2" cy="8.8" r="1.2" fill="#222"/><path d="M3.6 1.2 H14 M3.6 5 H14 M3.6 8.8 H14" stroke="#222" stroke-width="1.45"/></svg>
<svg class="ab" style="left:466px;top:583.4px" width="13" height="14" viewBox="0 0 13 14"><rect x="0" y="1.8" width="13" height="2.6" fill="#222"/><path d="M0.55 2 V13.45 H12.45 V2 M0.5 6.9 H12.5 M0.5 10.2 H12.5 M3.5 4 V13.5 M6.5 4 V13.5 M9.5 4 V13.5" fill="none" stroke="#2a2a2a" stroke-width="0.85"/><rect x="2.5" y="0.5" width="2.2" height="3.2" rx="1.1" fill="#fff" stroke="#222" stroke-width="1"/><rect x="8.3" y="0.5" width="2.2" height="3.2" rx="1.1" fill="#fff" stroke="#222" stroke-width="1"/></svg>
<svg class="ab" style="left:122px;top:637.6px" width="11" height="11" viewBox="0 0 11 11"><path d="M5.5 0 V11 M0 5.5 H11" stroke="#7b7b7b" stroke-width="3"/></svg>
<div class="t" style="left:142px;top:637.6px;font-size:14px;color:#333">12</div>
<div class="t link" style="left:167px;top:637.2px;font-size:13.7px">确认加工物资加工费</div>
<div class="nb" style="left:331px;top:633.6px"><svg style="position:absolute;left:12px;top:4.5px" width="9" height="13" viewBox="0 0 9 13"><path d="M5.3 0.3 L7.5 0.3 L7.5 12.6 L5.1 12.6 L5.1 3.6 Q3.6 5 1.2 5.8 L1.2 3.5 Q4 2.4 5.3 0.3Z" fill="#13968f"/></svg></div>
<div class="lb" style="left:377px;top:633.6px"></div>
<svg class="ab" style="left:388px;top:639.6px" width="14" height="10" viewBox="0 0 14 10"><circle cx="1.2" cy="1.2" r="1.2" fill="#222"/><circle cx="1.2" cy="5" r="1.2" fill="#222"/><circle cx="1.2" cy="8.8" r="1.2" fill="#222"/><path d="M3.6 1.2 H14 M3.6 5 H14 M3.6 8.8 H14" stroke="#222" stroke-width="1.45"/></svg>
<svg class="ab" style="left:466px;top:642.2px" width="13" height="14" viewBox="0 0 13 14"><rect x="0" y="1.8" width="13" height="2.6" fill="#222"/><path d="M0.55 2 V13.45 H12.45 V2 M0.5 6.9 H12.5 M0.5 10.2 H12.5 M3.5 4 V13.5 M6.5 4 V13.5 M9.5 4 V13.5" fill="none" stroke="#2a2a2a" stroke-width="0.85"/><rect x="2.5" y="0.5" width="2.2" height="3.2" rx="1.1" fill="#fff" stroke="#222" stroke-width="1"/><rect x="8.3" y="0.5" width="2.2" height="3.2" rx="1.1" fill="#fff" stroke="#222" stroke-width="1"/></svg>
<svg class="ab" style="left:122px;top:696.4px" width="11" height="11" viewBox="0 0 11 11"><path d="M5.5 0 V11 M0 5.5 H11" stroke="#7b7b7b" stroke-width="3"/></svg>
<div class="t" style="left:142px;top:696.4px;font-size:14px;color:#333">13</div>
<div class="t link" style="left:167px;top:696.0px;font-size:13.7px">收回委托加工物资</div>
<div class="nb" style="left:331px;top:692.4px"><svg style="position:absolute;left:12px;top:4.5px" width="9" height="13" viewBox="0 0 9 13"><path d="M5.3 0.3 L7.5 0.3 L7.5 12.6 L5.1 12.6 L5.1 3.6 Q3.6 5 1.2 5.8 L1.2 3.5 Q4 2.4 5.3 0.3Z" fill="#13968f"/></svg></div>
<div class="lb" style="left:377px;top:692.4px"></div>
<svg class="ab" style="left:388px;top:698.4px" width="14" height="10" viewBox="0 0 14 10"><circle cx="1.2" cy="1.2" r="1.2" fill="#222"/><circle cx="1.2" cy="5" r="1.2" fill="#222"/><circle cx="1.2" cy="8.8" r="1.2" fill="#222"/><path d="M3.6 1.2 H14 M3.6 5 H14 M3.6 8.8 H14" stroke="#222" stroke-width="1.45"/></svg>
<svg class="ab" style="left:466px;top:701.0px" width="13" height="14" viewBox="0 0 13 14"><rect x="0" y="1.8" width="13" height="2.6" fill="#222"/><path d="M0.55 2 V13.45 H12.45 V2 M0.5 6.9 H12.5 M0.5 10.2 H12.5 M3.5 4 V13.5 M6.5 4 V13.5 M9.5 4 V13.5" fill="none" stroke="#2a2a2a" stroke-width="0.85"/><rect x="2.5" y="0.5" width="2.2" height="3.2" rx="1.1" fill="#fff" stroke="#222" stroke-width="1"/><rect x="8.3" y="0.5" width="2.2" height="3.2" rx="1.1" fill="#fff" stroke="#222" stroke-width="1"/></svg>
<svg class="ab" style="left:122px;top:755.2px" width="11" height="11" viewBox="0 0 11 11"><path d="M5.5 0 V11 M0 5.5 H11" stroke="#7b7b7b" stroke-width="3"/></svg>
<div class="t" style="left:142px;top:755.2px;font-size:14px;color:#333">14</div>
<div class="t link" style="left:167px;top:754.8px;font-size:13.7px">采购固定资产</div>
<div class="nb" style="left:331px;top:751.2px"><svg style="position:absolute;left:12px;top:4.5px" width="9" height="13" viewBox="0 0 9 13"><path d="M5.3 0.3 L7.5 0.3 L7.5 12.6 L5.1 12.6 L5.1 3.6 Q3.6 5 1.2 5.8 L1.2 3.5 Q4 2.4 5.3 0.3Z" fill="#13968f"/></svg></div>
<div class="lb" style="left:377px;top:751.2px"></div>
<svg class="ab" style="left:388px;top:757.2px" width="14" height="10" viewBox="0 0 14 10"><circle cx="1.2" cy="1.2" r="1.2" fill="#222"/><circle cx="1.2" cy="5" r="1.2" fill="#222"/><circle cx="1.2" cy="8.8" r="1.2" fill="#222"/><path d="M3.6 1.2 H14 M3.6 5 H14 M3.6 8.8 H14" stroke="#222" stroke-width="1.45"/></svg>
<div class="t" style="left:437.5px;top:759.2px;font-size:13.8px;color:#333">2020-06-30</div>
<svg class="ab" style="left:122px;top:814.0px" width="11" height="11" viewBox="0 0 11 11"><path d="M5.5 0 V11 M0 5.5 H11" stroke="#7b7b7b" stroke-width="3"/></svg>
<div class="t" style="left:142px;top:814.0px;font-size:14px;color:#333">15</div>
<div class="t link" style="left:167px;top:813.6px;font-size:13.7px">付货款</div>
<div class="nb" style="left:331px;top:810.0px"><svg style="position:absolute;left:12px;top:4.5px" width="9" height="13" viewBox="0 0 9 13"><path d="M5.3 0.3 L7.5 0.3 L7.5 12.6 L5.1 12.6 L5.1 3.6 Q3.6 5 1.2 5.8 L1.2 3.5 Q4 2.4 5.3 0.3Z" fill="#13968f"/></svg></div>
<div class="lb" style="left:377px;top:810.0px"></div>
<svg class="ab" style="left:388px;top:816.0px" width="14" height="10" viewBox="0 0 14 10"><circle cx="1.2" cy="1.2" r="1.2" fill="#222"/><circle cx="1.2" cy="5" r="1.2" fill="#222"/><circle cx="1.2" cy="8.8" r="1.2" fill="#222"/><path d="M3.6 1.2 H14 M3.6 5 H14 M3.6 8.8 H14" stroke="#222" stroke-width="1.45"/></svg>
<div class="t" style="left:437.5px;top:818.0px;font-size:13.8px;color:#333">2020-06-30</div>
<svg class="ab" style="left:122px;top:843.4px" width="11" height="11" viewBox="0 0 11 11"><path d="M5.5 0 V11 M0 5.5 H11" stroke="#7b7b7b" stroke-width="3"/></svg>
<div class="t" style="left:142px;top:843.4px;font-size:14px;color:#333">16</div>
<div class="t link" style="left:167px;top:843.0px;font-size:13.7px"></div>
<div class="nb" style="left:331px;top:839.4px"><svg style="position:absolute;left:12px;top:4.5px" width="9" height="13" viewBox="0 0 9 13"><path d="M5.3 0.3 L7.5 0.3 L7.5 12.6 L5.1 12.6 L5.1 3.6 Q3.6 5 1.2 5.8 L1.2 3.5 Q4 2.4 5.3 0.3Z" fill="#13968f"/></svg></div>
<div class="lb" style="left:377px;top:839.4px"></div>
<svg class="ab" style="left:388px;top:845.4px" width="14" height="10" viewBox="0 0 14 10"><circle cx="1.2" cy="1.2" r="1.2" fill="#222"/><circle cx="1.2" cy="5" r="1.2" fill="#222"/><circle cx="1.2" cy="8.8" r="1.2" fill="#222"/><path d="M3.6 1.2 H14 M3.6 5 H14 M3.6 8.8 H14" stroke="#222" stroke-width="1.45"/></svg>
<svg class="ab" style="left:466px;top:848.0px" width="13" height="14" viewBox="0 0 13 14"><rect x="0" y="1.8" width="13" height="2.6" fill="#222"/><path d="M0.55 2 V13.45 H12.45 V2 M0.5 6.9 H12.5 M0.5 10.2 H12.5 M3.5 4 V13.5 M6.5 4 V13.5 M9.5 4 V13.5" fill="none" stroke="#2a2a2a" stroke-width="0.85"/><rect x="2.5" y="0.5" width="2.2" height="3.2" rx="1.1" fill="#fff" stroke="#222" stroke-width="1"/><rect x="8.3" y="0.5" width="2.2" height="3.2" rx="1.1" fill="#fff" stroke="#222" stroke-width="1"/></svg>
<div class="t" style="left:858px;top:520.5px;font-size:14px;color:#222">【录入】</div>
<svg class="ab" style="left:921px;top:518.0px" width="15" height="14" viewBox="0 0 15 14"><path d="M7 2.5 L2 2.5 Q1 2.5 1 3.5 L1 12 Q1 13 2 13 L11 13 Q12 13 12 12 L12 9" fill="none" stroke="#1a8a1a" stroke-width="1.8"/><path d="M4 10 Q4 5 10 4.5 L10 1.5 L14.5 5.5 L10 9.5 L10 7 Q6 7 4 10Z" fill="#1a8a1a"/></svg>
<svg class="ab" style="left:949px;top:520.0px" width="12" height="12" viewBox="0 0 12 12"><path d="M6 0 V12 M0 6 H12" stroke="#777" stroke-width="3"/></svg>
<svg class="ab" style="left:975px;top:519.0px" width="15" height="15" viewBox="0 0 15 15"><rect x="0.8" y="0.8" width="13.4" height="13.4" fill="none" stroke="#777" stroke-width="1.5"/><path d="M0.8 4.5 H14" stroke="#777" stroke-width="1.5"/><path d="M1 7.5 H14 M1 10.5 H14 M4.5 4.5 V14 M7.5 4.5 V14 M10.5 4.5 V14" stroke="#777" stroke-width="1"/></svg>
<svg class="ab" style="left:1004px;top:524.5px" width="13" height="4" viewBox="0 0 13 4"><path d="M0 2 H13" stroke="#777" stroke-width="3"/></svg>
<svg class="ab" style="left:1030px;top:520.0px" width="12" height="14" viewBox="0 0 12 14"><path d="M0.5 2.5 H11.5 M4 2.5 V0.8 H8 V2.5" fill="none" stroke="#777" stroke-width="1.2"/><path d="M1.8 3.5 L2.5 13 H9.5 L10.2 3.5" fill="none" stroke="#777" stroke-width="1.3"/><path d="M4.3 5 V11.5 M6 5 V11.5 M7.7 5 V11.5" stroke="#777" stroke-width="0.9"/></svg>
<div class="ab" style="left:290px;top:144px;width:524px;height:38px;background:#fff;border:1px solid #e0e0e0;border-radius:3px;box-shadow:0 2px 5px rgba(0,0,0,0.18)"></div>
<div class="ab" style="left:291px;top:150px;width:521px;height:26px;background:#d9efea"></div>
<div class="t" style="left:295px;top:157px;font-size:14px;color:#222;font-weight:bold">深圳兰芝科技有限公司【000001】</div>
<div class="ab" style="left:1792px;top:53px;width:25px;height:790px;background:#f1f1f1"></div>
<div class="ab" style="left:1794px;top:78px;width:21px;height:281px;background:#c1c1c1"></div>
<svg class="ab" style="left:1798px;top:62px" width="13" height="8" viewBox="0 0 13 8"><path d="M1 7 L6.5 1 L12 7Z" fill="#a3a3a3"/></svg>
<svg class="ab" style="left:1798px;top:826px" width="13" height="8" viewBox="0 0 13 8"><path d="M1 1 L6.5 7 L12 1Z" fill="#505050"/></svg>
<div class="ab" style="left:84px;top:843px;width:1708px;height:25px;background:#f1f1f1"></div>
<div class="ab" style="left:109px;top:845px;width:1423px;height:21px;background:#c1c1c1"></div>
<svg class="ab" style="left:93px;top:849px" width="7" height="12" viewBox="0 0 7 12"><path d="M7 0 L0 6 L7 12Z" fill="#a3a3a3"/></svg>
<svg class="ab" style="left:1777px;top:849px" width="7" height="12" viewBox="0 0 7 12"><path d="M0 0 L7 6 L0 12Z" fill="#505050"/></svg>
<div class="ab" style="left:1792px;top:843px;width:25px;height:25px;background:#dcdcdc"></div>
<div class="ab" style="left:1817px;top:53px;width:31px;height:815px;background:#e3e3e3;border-left:1px solid #c8c8c8"></div>
<div class="ab" style="left:1818px;top:55px;width:30px;height:30px;background:#22b08f"></div>
<svg class="ab" style="left:1825px;top:62px" width="16" height="14" viewBox="0 0 16 14"><path d="M2 7 L8 1.5 L14 7 M2 12.5 L8 7 L14 12.5" fill="none" stroke="#fff" stroke-width="2.2"/></svg>
<div class="ab" style="left:1818px;top:92px;width:30px;height:105px;background:#22b08f"></div>
<svg class="ab" style="left:1818px;top:137px" width="7" height="16" viewBox="0 0 7 16"><path d="M0 0 L7 8 L0 16Z" fill="#fff"/></svg>
<div class="t" style="left:1827px;top:103px;font-size:14.5px;color:#fff;line-height:16.5px;white-space:normal;width:16px">快速做账</div>
<svg class="ab" style="left:1825px;top:174px" width="16" height="16" viewBox="0 0 16 16"><circle cx="8" cy="8" r="7.5" fill="#fff"/><path d="M5 5 L11 11 M11 5 L5 11" stroke="#22b08f" stroke-width="2.5"/></svg>
<div class="ab" style="left:1842px;top:0;width:6px;height:75px;background:#fff"></div>
<div class="ab" style="left:1842px;top:152.5px;width:6px;height:107px;background:linear-gradient(#7aa6c8,#a6c6da 45%,#8db5d0 75%,#6b98bd);border-radius:3px 0 0 3px;box-shadow:-1px 0 2px rgba(0,0,0,0.25)"></div>
<div class="ab" style="left:1834px;top:754px;width:98px;height:98px;border-radius:50%;background:#45a2f3;border:2.5px solid #fff"></div>
<div class="ab" style="left:1818px;top:837px;width:30px;height:30px;background:#22b08f"></div>
<svg class="ab" style="left:1828px;top:845px" width="14" height="13" viewBox="0 0 14 13"><path d="M1.5 1.5 L7 6.5 L12.5 1.5 M1.5 6.5 L7 11.5 L12.5 6.5" fill="none" stroke="#fff" stroke-width="2"/></svg>
<div class="ab" style="left:1551px;top:755px;width:297px;height:39px;background:#fff;border:1px solid #b8bcc4;border-right:none"></div>
<svg class="ab" style="left:1535px;top:750px" width="48" height="46" viewBox="0 0 48 46"><defs><linearGradient id="sg" x1="0" y1="0" x2="0" y2="1"><stop offset="0" stop-color="#f26f36"/><stop offset="1" stop-color="#e84b0e"/></linearGradient></defs><path d="M4.5 11.5 L35.5 4.5 L44 31 L11.5 42Z" fill="url(#sg)" stroke="url(#sg)" stroke-width="5" stroke-linejoin="round"/><path d="M35.5 12.5 C29 9.5, 14 11.5, 11.5 17.5 C9.5 23.5, 21 22.5, 27.5 23.5 C35 25, 34.5 31, 27 33.5 C21 35.5, 15 36, 12 35.8" fill="none" stroke="#fff" stroke-width="5.2"/></svg>
<svg class="ab" style="left:1587px;top:764px" width="24" height="23" viewBox="0 0 24 23"><rect x="2.5" y="5.5" width="18" height="10" rx="2.5" fill="none" stroke="#2473c8" stroke-width="2.8"/><path d="M11.6 1.6 V20.4" stroke="#2473c8" stroke-width="2.9" stroke-linecap="round"/></svg>
<svg class="ab" style="left:1622px;top:767px" width="22" height="20" viewBox="0 0 22 20"><circle cx="5" cy="4.8" r="2.6" fill="none" stroke="#2473c8" stroke-width="1.6"/><circle cx="15.5" cy="11" r="3.2" fill="#2473c8"/><path d="M17.5 11.5 Q18 16 12.5 18.5 Q15.5 15 14.5 12Z" fill="#2473c8"/></svg>
<svg class="ab" style="left:1652.5px;top:763.5px" width="24.5" height="24" viewBox="0 0 24.5 24"><circle cx="12.2" cy="12" r="10.5" fill="none" stroke="#2473c8" stroke-width="2.8"/><ellipse cx="8.2" cy="8.7" rx="1.3" ry="1.8" fill="#2473c8"/><ellipse cx="16.3" cy="8.7" rx="1.3" ry="1.8" fill="#2473c8"/><path d="M6.3 13.8 Q12.2 19.5 18.1 13.8" fill="none" stroke="#2473c8" stroke-width="2.4"/></svg>
<svg class="ab" style="left:1689.5px;top:763px" width="18" height="25" viewBox="0 0 18 25"><rect x="5" y="0" width="8" height="16" rx="4" fill="#2473c8"/><path d="M1.6 10.5 Q1.6 19.2 9 19.2 Q16.4 19.2 16.4 10.5" fill="none" stroke="#2473c8" stroke-width="2.8"/><path d="M9 19 V23" stroke="#2473c8" stroke-width="2.8"/><rect x="4.5" y="22" width="9" height="2.6" rx="0.8" fill="#2473c8"/></svg>
<svg class="ab" style="left:1719.5px;top:766px" width="24" height="19" viewBox="0 0 24 19"><rect x="1.3" y="1.3" width="21.4" height="16" rx="2.8" fill="none" stroke="#2473c8" stroke-width="2.6"/><path d="M4.5 5.6 H19.5 M5.8 9.4 H18.2" stroke="#2473c8" stroke-width="2.4" stroke-dasharray="2.4 1.4"/><path d="M4.5 13.2 H6.6 M8 13.2 H19.5" stroke="#2473c8" stroke-width="2.4"/></svg>
<svg class="ab" style="left:1754.5px;top:764.5px" width="27" height="23" viewBox="0 0 27 23"><circle cx="9.5" cy="4.8" r="4.5" fill="#bcc8da"/><path d="M1 19.5 Q1 10.5 9.5 10.5 Q14 10.5 16 12.5 L16 21 L4 21Z" fill="#bcc8da"/><rect x="10" y="11.5" width="16.5" height="11" fill="#c9d3e2"/><path d="M12.3 14.5 L14.5 13 V21.5 M17.5 13.2 H23.5 M17.8 13.2 V16.8 H23 V21 H17.5" fill="none" stroke="#fff" stroke-width="2.2"/></svg>
<svg class="ab" style="left:1787px;top:764.5px" width="22" height="21" viewBox="0 0 22 21"><path d="M7 0.5 Q11 3.5 15 0.5 L21.3 3.6 L19.3 9.2 L17.2 8.4 L17.2 19.5 Q17.2 20.6 16 20.6 L6 20.6 Q4.8 20.6 4.8 19.5 L4.8 8.4 L2.7 9.2 L0.7 3.6Z" fill="#2473c8" stroke="#2473c8" stroke-width="0.8" stroke-linejoin="round"/></svg>
<svg class="ab" style="left:1820.5px;top:764.5px" width="20" height="20" viewBox="0 0 20 20"><rect x="0.3" y="0.3" width="8.4" height="8.6" rx="1.4" fill="#2473c8"/><rect x="11.8" y="1.6" width="6.8" height="6.2" rx="1" fill="none" stroke="#2473c8" stroke-width="2.4"/><rect x="0.3" y="11" width="8.4" height="8.6" rx="1.4" fill="#2473c8"/><rect x="10.6" y="11" width="8.8" height="8.6" rx="1.4" fill="#2473c8"/></svg>
</body></html>
